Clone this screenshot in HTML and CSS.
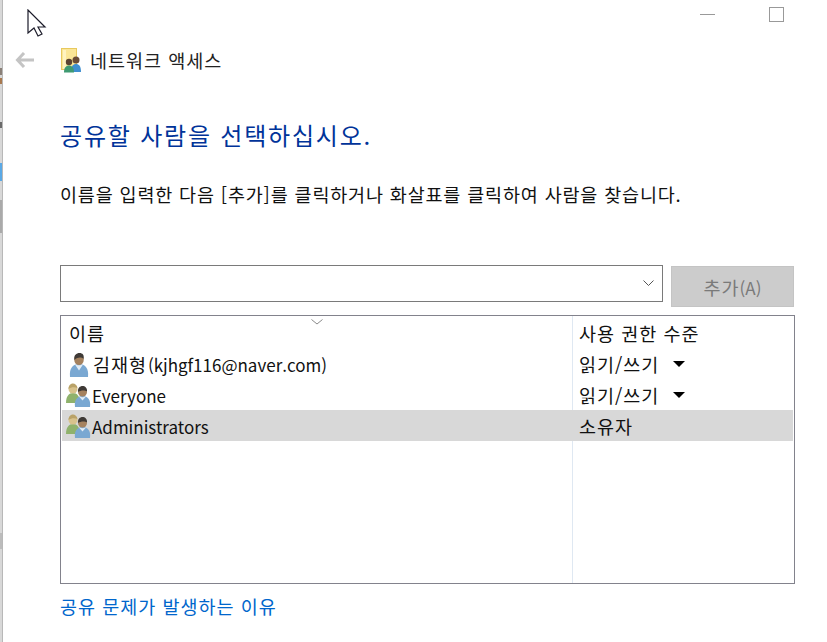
FILE: index.html
```html
<!DOCTYPE html>
<html lang="ko">
<head>
    <meta charset="UTF-8">
    <meta name="viewport" content="width=device-width, initial-scale=1.0">
    <title>네트워크 액세스</title>
    <link rel="stylesheet" href="styles.css">
</head>
<body>
    <div class="edge">
        <div class="edge-bit edge-brown"></div>
        <div class="edge-bit edge-dark"></div>
        <div class="edge-bit edge-blue"></div>
        <div class="edge-bit edge-grey"></div>
        <div class="edge-bit edge-shade"></div>
    </div>
    <div class="window">
        <div class="titlebar">
            <div class="min-btn"></div>
            <div class="max-btn"></div>
        </div>
        <div class="nav">
            <svg class="back" width="20" height="16" viewBox="0 0 20 16">
                <path d="M9 1 2.500 8 9 15M3 8h16" fill="none" stroke="#c4c4c4" stroke-width="3"/>
            </svg>
            <svg class="nav-icon" width="21" height="26" viewBox="0 0 21 26">
                <rect x="0.500" y="1.500" width="15" height="21" fill="#fbe697" stroke="#e8c95e"/>
                <rect x="2" y="3" width="3" height="19" fill="#fff3c0"/>
                <circle cx="15" cy="13" r="3.500" fill="#6b4c36"/>
                <path d="M10 25c0-6 2-8 5-8s5 2 5 8z" fill="#3f8fd0"/>
                <circle cx="8" cy="15" r="3.200" fill="#5b4332"/>
                <path d="M3 25.500c0-5 2-7 5-7s5 2 5 7z" fill="#3f9a72"/>
            </svg>
            <span class="nav-title">네트워크 액세스</span>
        </div>
        <div class="content">
            <h1>공유할 사람을 선택하십시오.</h1>
            <p class="hint">이름을 입력한 다음 [추가]를 클릭하거나 화살표를 클릭하여 사람을 찾습니다.</p>
            <div class="add-row">
                <div class="combo">
                    <svg width="11" height="7" viewBox="0 0 11 7"><path d="M.5.5 5.500 5.500 10.500.5" fill="none" stroke="#555"/></svg>
                </div>
                <button type="button" class="add-btn" disabled>추가<span class="latin">(A)</span></button>
            </div>
            <div class="list">
                <svg class="sort" width="12" height="6" viewBox="0 0 12 6"><path d="M.5.5 6 5 11.500.5" fill="none" stroke="#8a8a8a"/></svg>
                <div class="row head">
                    <div class="col-name head-name">이름</div>
                    <div class="col-perm">사용 권한 수준</div>
                </div>
                <div class="row">
                    <div class="col-name">
                        <svg class="icon" width="24" height="24" viewBox="0 0 24 24">
                            <path d="M3 24c-1-9 3-13 9-13s10 4 9 13z" fill="#7aa8d2"/>
                            <path d="M8 11.500c2 1 6 1 8 0l-4 6z" fill="#e3edf6"/>
                            <ellipse cx="12" cy="6.500" rx="4.800" ry="5.500" fill="#a5825f"/>
                            <path d="M7.500 7c-1-5 2-7 5-7s5 2 4 6c-2-2-6-2-9 1z" fill="#3f3a36"/>
                        </svg>
                        <span class="latin name-top"><span class="kr-name">김재형</span>(kjhgf116@naver.com)</span>
                    </div>
                    <div class="col-perm perm-pick">읽기/쓰기 <i class="caret"></i></div>
                </div>
                <div class="row">
                    <div class="col-name">
                        <svg class="icon group" width="26" height="24" viewBox="0 0 26 24">
                            <path d="M1 20c0-7 3-10 7-10s7 3 7 10z" fill="#8fb26c"/>
                            <circle cx="8" cy="6" r="4.500" fill="#d8c28c"/>
                            <path d="M3.500 6c0-4 2.500-5.500 4.500-5.500S12 2 12.500 5C10 4 6 4 3.500 6z" fill="#b9a268"/>
                            <path d="M10 24c-1-7 2-11 7.500-11S26 17 25 24z" fill="#7aa8d2"/>
                            <path d="M14 13.500c2 1 5 1 7 0l-3.500 4z" fill="#e3edf6"/>
                            <circle cx="17.500" cy="9" r="4.500" fill="#a5825f"/>
                            <path d="M13 9c-.5-4 2-6 4.500-6s5 2 4.500 5.500c-2-1.500-6-1.500-9 .5z" fill="#3f3a36"/>
                        </svg>
                        <span class="latin name-low">Everyone</span>
                    </div>
                    <div class="col-perm">읽기/쓰기 <i class="caret"></i></div>
                </div>
                <div class="row selected">
                    <div class="col-name">
                        <svg class="icon group" width="26" height="24" viewBox="0 0 26 24">
                            <path d="M1 20c0-7 3-10 7-10s7 3 7 10z" fill="#8fb26c"/>
                            <circle cx="8" cy="6" r="4.500" fill="#d8c28c"/>
                            <path d="M3.500 6c0-4 2.500-5.500 4.500-5.500S12 2 12.500 5C10 4 6 4 3.500 6z" fill="#b9a268"/>
                            <path d="M10 24c-1-7 2-11 7.500-11S26 17 25 24z" fill="#7aa8d2"/>
                            <path d="M14 13.500c2 1 5 1 7 0l-3.500 4z" fill="#e3edf6"/>
                            <circle cx="17.500" cy="9" r="4.500" fill="#a5825f"/>
                            <path d="M13 9c-.5-4 2-6 4.500-6s5 2 4.500 5.500c-2-1.500-6-1.500-9 .5z" fill="#3f3a36"/>
                        </svg>
                        <span class="latin name-low">Administrators</span>
                    </div>
                    <div class="col-perm">소유자</div>
                </div>
            </div>
            <a class="help" href="#">공유 문제가 발생하는 이유</a>
        </div>
    </div>
    <svg class="cursor" width="20" height="28" viewBox="0 0 20 28">
        <path d="M1 1v23l6-5 4 8 4-2-4-7h7z" fill="#fff" stroke="#1c1c2a" stroke-width="1.200"/>
    </svg>
</body>
</html>
```

FILE: styles.css
```css
html, body {
    margin: 0;
    height: 100%;
}
body {
    display: flex;
    height: 642px;
    overflow: hidden;
    background: #fff;
    color: #111;
    font-family: "Noto Sans CJK KR", "Noto Sans", sans-serif;
    font-size: 18.500px;
    letter-spacing: 1px;
}
.latin {
    font-size: 17px;
    letter-spacing: 0;
}
.edge {
    width: 2px;
    background: #d8d8d8;
    border-right: 1px solid #b8b8b8;
    display: flex;
    flex-direction: column;
    flex-shrink: 0;
}
.edge-bit {
    width: 2px;
}
.edge-brown {
    height: 16px;
    margin-top: 68px;
    background: linear-gradient(to bottom, #8a8078 0 7px, #d8d8d8 7px 10px, #a8794f 10px);
}
.edge-dark {
    height: 6px;
    margin-top: 38px;
    background: #6a6a6a;
}
.edge-blue {
    height: 18px;
    margin-top: 35px;
    background: #5aa9e6;
}
.edge-grey {
    height: 33px;
    margin-top: 19px;
    background: #aaaaaa;
}
.edge-shade {
    height: 16px;
    margin-top: 300px;
    background: #bcbcbc;
}
.window {
    flex: 1;
    display: flex;
    flex-direction: column;
}
.titlebar {
    height: 40px;
    display: flex;
    justify-content: flex-end;
    align-items: flex-start;
    padding-right: 43px;
}
.min-btn {
    width: 15px;
    height: 1px;
    margin-top: 14px;
    background: #999;
}
.max-btn {
    width: 13px;
    height: 13px;
    margin: 7px 0 0 54px;
    border: 1px solid #999;
}
.nav {
    height: 40px;
    display: flex;
    align-items: center;
}
.back {
    margin-left: 12px;
}
.nav-icon {
    margin-left: 26px;
}
.nav-title {
    margin-left: 8px;
    color: #222;
    line-height: 30px;
}
.content {
    padding: 0 32px 0 57px;
}
h1 {
    margin: 35px 0 0;
    height: 40px;
    font-size: 24px;
    letter-spacing: 1.800px;
    font-weight: 400;
    line-height: 40px;
    color: #003399;
}
.hint {
    margin: 24px 0 0;
    height: 30px;
    line-height: 30px;
    letter-spacing: 0.830px;
}
.add-row {
    display: flex;
    gap: 8px;
    margin-top: 56px;
    margin-right: 1px;
}
.combo {
    flex: 1;
    height: 35px;
    border: 1px solid #7a7a7a;
    display: flex;
    align-items: center;
    justify-content: flex-end;
    padding-right: 8px;
}
.add-btn {
    width: 123px;
    height: 41px;
    margin-top: 1px;
    background: #cccccc;
    border: 1px solid #c4c4c4;
    color: #7a7a7a;
    font-family: inherit;
    font-size: 18.500px;
    letter-spacing: 1px;
    padding: 0;
}
.list {
    position: relative;
    height: 267px;
    margin-top: 8px;
    border: 1px solid #82828c;
    background: linear-gradient(to right, transparent 511px, #dfe8f2 511px, #dfe8f2 512px, transparent 512px);
}
.sort {
    position: absolute;
    left: 250px;
    top: 3px;
}
.row {
    display: flex;
    height: 30px;
    line-height: 30px;
    margin: 0 1px;
}
.row.head {
    height: 34px;
    line-height: 35px;
}
.row.selected {
    height: 31px;
    background: #d8d8d8;
}
.col-name {
    width: 510px;
    display: flex;
    align-items: center;
    padding-left: 6px;
    box-sizing: border-box;
}
.head-name {
    padding-left: 7px;
}
.col-perm {
    padding-left: 7px;
    display: flex;
    align-items: center;
}
.perm-pick {
    padding-bottom: 2px;
}
.icon {
    margin-right: 2px;
    margin-left: -1px;
    flex-shrink: 0;
}
.icon.group {
    margin-left: -3px;
    margin-right: 1px;
}
.name-top {
    margin-bottom: 2px;
}
.name-low {
    margin-top: 2px;
}
.kr-name {
    font-size: 18.500px;
    letter-spacing: 1px;
    margin-right: 1px;
}
.caret {
    width: 0;
    height: 0;
    margin-left: 14px;
    border-left: 6px solid transparent;
    border-right: 6px solid transparent;
    border-top: 6px solid #000;
}
.cursor {
    position: absolute;
    left: 27px;
    top: 9px;
}
.help {
    display: block;
    margin-top: 8px;
    line-height: 28px;
    color: #0066cc;
    text-decoration: none;
}
```
